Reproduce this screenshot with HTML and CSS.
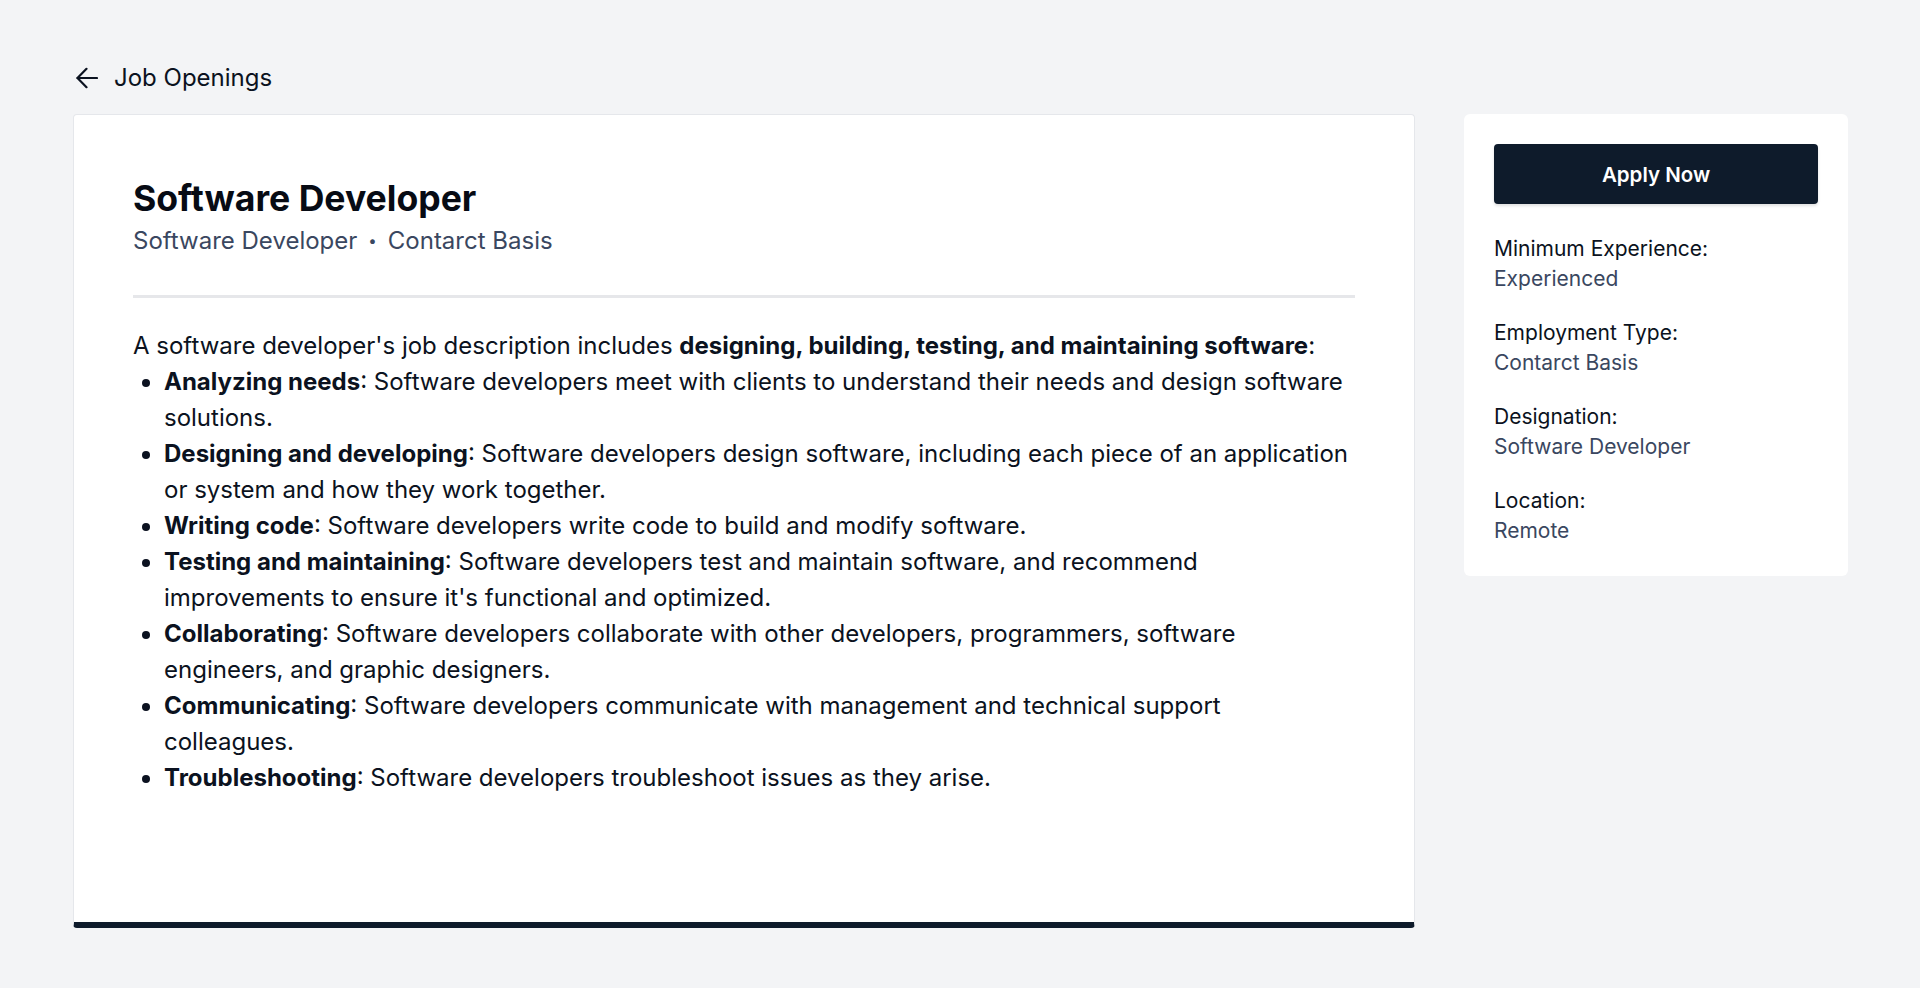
FILE: index.html
```html
<!DOCTYPE html>
<html lang="en">
<head>
<meta charset="utf-8">
<title>Software Developer - Job Openings</title>
<link rel="stylesheet" href="styles.css">
</head>
<body>
<div class="page">
  <a class="back" href="#">
    <svg class="back-icon" viewBox="0 0 22 22" width="22" height="22" fill="none" stroke="currentColor" stroke-width="2.2" stroke-linecap="round" stroke-linejoin="round"><path d="M21 11H1.5"/><path d="M10.5 1.8L1.5 11l9 9.2"/></svg>
    <span>Job Openings</span>
  </a>
  <div class="layout">
    <main class="card">
      <h1 class="title">Software Developer</h1>
      <div class="meta"><span>Software Developer</span><span class="dot">•</span><span>Contarct Basis</span></div>
      <hr class="divider">
      <div class="desc">
        <p>A software developer's job description includes <strong>designing, building, testing, and maintaining software</strong>:</p>
        <ul>
          <li><strong>Analyzing needs</strong>: Software developers meet with clients to understand their needs and design software solutions.</li>
          <li><strong>Designing and developing</strong>: Software developers design software, including each piece of an application or system and how they work together.</li>
          <li><strong>Writing code</strong>: Software developers write code to build and modify software.</li>
          <li><strong>Testing and maintaining</strong>: Software developers test and maintain software, and recommend improvements to ensure it's functional and optimized.</li>
          <li><strong>Collaborating</strong>: Software developers collaborate with other developers, programmers, software engineers, and graphic designers.</li>
          <li><strong>Communicating</strong>: Software developers communicate with management and technical support colleagues.</li>
          <li><strong>Troubleshooting</strong>: Software developers troubleshoot issues as they arise.</li>
        </ul>
      </div>
    </main>
    <aside class="side">
      <button class="apply" type="button">Apply Now</button>
      <dl class="facts">
        <div class="fact"><dt>Minimum Experience:</dt><dd>Experienced</dd></div>
        <div class="fact"><dt>Employment Type:</dt><dd>Contarct Basis</dd></div>
        <div class="fact"><dt>Designation:</dt><dd>Software Developer</dd></div>
        <div class="fact"><dt>Location:</dt><dd>Remote</dd></div>
      </dl>
    </aside>
  </div>
</div>
</body>
</html>
```

FILE: styles.css
```css
* { box-sizing: border-box; }
html, body { margin: 0; padding: 0; }
body {
  background: #f3f4f6;
  font-family: Inter, "Noto Sans", sans-serif;
  color: #0b1220;
}
.page {
  padding: 58px 72px 40px 73px;
}
.back {
  display: inline-flex;
  align-items: center;
  gap: 16px;
  color: #0b1220;
  text-decoration: none;
  font-size: 24px;
  line-height: 40px;
  padding-left: 3px;
}
.back-icon { display: block; }
.layout {
  display: flex;
  align-items: flex-start;
  gap: 49px;
  margin-top: 16px;
}
.card {
  flex: 1;
  background: #fff;
  border: 1px solid #e5e7eb;
  border-bottom: 6px solid #0e1b2b;
  border-radius: 4px;
  min-height: 814px;
  padding: 60px 59px 40px;
}
.title {
  margin: 0;
  font-size: 35.6px;
  line-height: 48px;
  font-weight: 700;
  color: #070b14;
}
.meta {
  display: flex;
  align-items: center;
  margin-top: 2px;
  font-size: 24px;
  line-height: 32px;
  color: #3a4760;
}
.dot {
  font-size: 15px;
  margin: 0 11px;
}
.divider {
  border: 0;
  height: 3px;
  background: #e6e7ea;
  margin: 38px 0 30px;
}
.desc {
  font-size: 24px;
  line-height: 36px;
  color: #0b1220;
}
.desc p { margin: 0; }
.desc ul {
  margin: 0;
  padding-left: 31px;
}
.desc strong { font-weight: 700; }
.side {
  width: 384px;
  flex: none;
  background: #fff;
  border-radius: 6px;
  padding: 30px;
}
.apply {
  display: block;
  width: 100%;
  height: 60px;
  border: 0;
  border-radius: 4px;
  background: #0e1b2b;
  color: #fff;
  font-family: inherit;
  font-size: 20.5px;
  font-weight: 600;
  box-shadow: 0 2px 3px rgba(0, 0, 0, 0.12);
}
.facts {
  margin: 30px 0 0;
  display: flex;
  flex-direction: column;
  gap: 24px;
}
.fact dt {
  font-size: 21px;
  line-height: 30px;
  color: #0b1220;
}
.fact dd {
  margin: 0;
  font-size: 21px;
  line-height: 30px;
  color: #3a4760;
}
```
